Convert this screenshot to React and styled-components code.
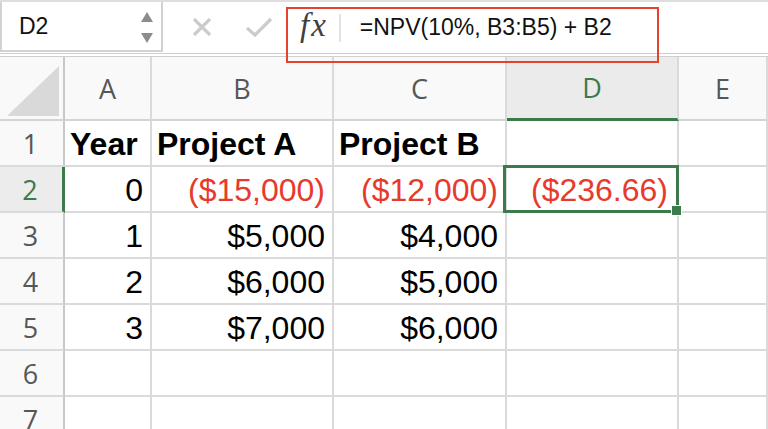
import styled, { createGlobalStyle } from "styled-components";

const GREEN = "#3b7a4a";
const RED = "#e63a2c";
const GRID = "#dadada";

const GlobalStyle = createGlobalStyle`
  html, body {
    margin: 0;
    padding: 0;
    background: #fff;
    overflow: hidden;
  }
  body {
    font-family: "Liberation Sans", Arial, sans-serif;
  }
`;

const columns = ["A", "B", "C", "D", "E"];

// each row: [text, align, bold, red, selected]
const rows = [
  [["Year", "left", true], ["Project A", "left", true], ["Project B", "left", true], [""], [""]],
  [["0"], ["($15,000)", "right", false, true], ["($12,000)", "right", false, true], ["($236.66)", "right", false, true, true], [""]],
  [["1"], ["$5,000"], ["$4,000"], [""], [""]],
  [["2"], ["$6,000"], ["$5,000"], [""], [""]],
  [["3"], ["$7,000"], ["$6,000"], [""], [""]],
  [[""], [""], [""], [""], [""]],
  [[""], [""], [""], [""], [""]],
];

function App() {
  return (
    <Window>
      <GlobalStyle />
      <Toolbar>
        <NameBox>
          <span>D2</span>
          <Stepper>
            <Arrow />
            <Arrow $down />
          </Stepper>
        </NameBox>
        <Actions>
          <svg width="22" height="18" viewBox="0 0 22 18">
            <path d="M3 1 L19 17 M19 1 L3 17" stroke="#cbcbcb" strokeWidth="3.2" fill="none" />
          </svg>
          <svg width="28" height="20" viewBox="0 0 28 20">
            <path d="M2 11 L10 18 L26 2" stroke="#cbcbcb" strokeWidth="3.2" fill="none" />
          </svg>
        </Actions>
        <FormulaBar>
          <Fx>fx</Fx>
          <Divider />
          <Formula>=NPV(10%, B3:B5) + B2</Formula>
          <Highlight />
        </FormulaBar>
      </Toolbar>

      <Sheet>
        <Corner>
          <svg width="52" height="50" viewBox="0 0 52 50">
            <polygon points="52,0 52,50 0,50" fill="#d9d9d9" />
          </svg>
        </Corner>
        {columns.map((c) => (
          <ColHead key={c} $active={c === "D"}>{c}</ColHead>
        ))}
        {rows.map((row, i) => (
          <Row key={i}>
            <RowHead $active={i === 1}>{i + 1}</RowHead>
            {row.map(([text, align = "right", bold, red, selected], j) => (
              <Cell key={j} $align={align} $bold={bold} $red={red} $selected={selected}>
                {text}
              </Cell>
            ))}
          </Row>
        ))}
      </Sheet>
    </Window>
  );
}

export default App;

const Window = styled.div`
  width: 768px;
  height: 429px;
  overflow: hidden;
  background: #fff;
`;

const Toolbar = styled.div`
  display: flex;
  height: 57px;
  box-sizing: border-box;
  border-top: 2px solid #dedede;
  border-bottom: 4px double #cfcfcf;
  background: #fff;
`;

const NameBox = styled.div`
  width: 163px;
  height: 50px;
  box-sizing: border-box;
  border: 2px solid #d2d2d2;
  border-top: none;
  display: flex;
  align-items: center;
  justify-content: space-between;
  padding: 0 8px 0 17px;
  font-size: 23px;
  color: #111;
`;

const Stepper = styled.div`
  display: flex;
  flex-direction: column;
  gap: 11px;
  padding-top: 2px;
`;

const Arrow = styled.div`
  width: 0;
  height: 0;
  border-left: 6px solid transparent;
  border-right: 6px solid transparent;
  ${(p) =>
    p.$down
      ? `border-top: 10px solid #8c8c8c;`
      : `border-bottom: 10px solid #8c8c8c;`}
`;

const Actions = styled.div`
  width: 124px;
  display: flex;
  align-items: center;
  padding: 0 0 2px 28px;
  gap: 32px;
  box-sizing: border-box;
`;

const FormulaBar = styled.div`
  position: relative;
  flex: 1;
  display: flex;
  align-items: center;
  padding-left: 13px;
`;

const Fx = styled.span`
  font-family: "Liberation Serif", "Times New Roman", serif;
  font-style: italic;
  font-size: 33px;
  letter-spacing: 2px;
  color: #3f3f3f;
  margin-top: -4px;
`;

const Divider = styled.div`
  width: 2px;
  height: 28px;
  background: #e2e2e2;
  margin: 0 19px 0 11px;
`;

const Formula = styled.span`
  font-size: 23px;
  color: #111;
`;

const Highlight = styled.div`
  position: absolute;
  left: -1px;
  top: 5px;
  width: 373px;
  height: 56px;
  box-sizing: border-box;
  border: 2.5px solid #e5432f;
  pointer-events: none;
`;

const Sheet = styled.div`
  display: grid;
  grid-template-columns: 65px 87px 182px 173px 172px 1fr;
  grid-template-rows: 64px repeat(7, 46px);
`;

const Row = styled.div`
  display: contents;
`;

const Corner = styled.div`
  display: flex;
  align-items: flex-end;
  justify-content: flex-end;
  padding: 0 4px 3px 0;
  background: #f9f9f9;
  border-right: 2px solid #c8c8c8;
  border-bottom: 2px solid #d4d4d4;
`;

const ColHead = styled.div`
  display: flex;
  align-items: center;
  justify-content: center;
  font-family: "Open Sans", "Liberation Sans", sans-serif;
  font-size: 27px;
  color: ${(p) => (p.$active ? GREEN : "#575757")};
  background: ${(p) => (p.$active ? "#ebebeb" : "#f9f9f9")};
  border-right: 2px solid ${GRID};
  border-bottom: ${(p) => (p.$active ? `3px solid ${GREEN}` : "2px solid #d4d4d4")};
`;

const RowHead = styled.div`
  display: flex;
  align-items: center;
  justify-content: center;
  padding-right: 2px;
  font-family: "Open Sans", "Liberation Sans", sans-serif;
  font-size: 27px;
  color: ${(p) => (p.$active ? GREEN : "#575757")};
  background: ${(p) => (p.$active ? "#ececec" : "#f9f9f9")};
  border-right: ${(p) => (p.$active ? `3px solid ${GREEN}` : "2px solid #c8c8c8")};
  border-bottom: 2px solid ${GRID};
`;

const Cell = styled.div`
  position: relative;
  display: flex;
  align-items: center;
  justify-content: ${(p) => (p.$align === "left" ? "flex-start" : "flex-end")};
  padding: ${(p) => (p.$align === "left" ? "2px 0 0 5px" : "2px 7px 0 0")};
  font-size: 32px;
  font-weight: ${(p) => (p.$bold ? 700 : 400)};
  color: ${(p) => (p.$red ? RED : "#000")};
  white-space: nowrap;
  border-right: 2px solid ${GRID};
  border-bottom: 2px solid ${GRID};

  ${(p) =>
    p.$selected &&
    `
    padding-right: 9px;
    &::after {
      content: "";
      position: absolute;
      left: -4px;
      top: -2px;
      right: -2px;
      bottom: -2px;
      border: 3px solid ${GREEN};
    }
    &::before {
      content: "";
      position: absolute;
      right: -5px;
      bottom: -5px;
      width: 9px;
      height: 9px;
      background: ${GREEN};
      border: 1px solid #fff;
      z-index: 1;
    }
  `}
`;
